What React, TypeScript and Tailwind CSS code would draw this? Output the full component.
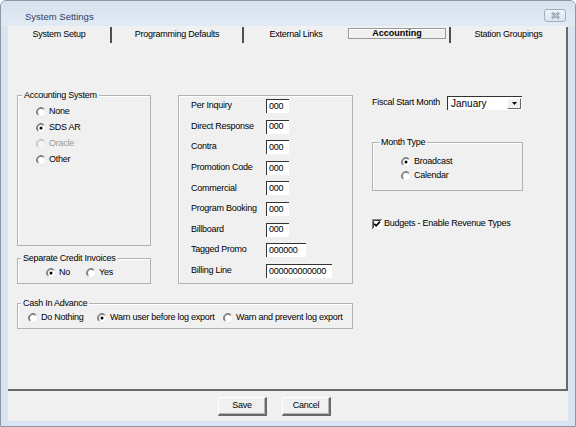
import React from "react";

function Radio({ checked = false, disabled = false }: { checked?: boolean; disabled?: boolean }) {
  const dark = disabled ? "#b4b4b4" : "#808080";
  const darker = disabled ? "#c4c4c4" : "#404040";
  return (
    <svg width="10" height="10" viewBox="0 0 12 12" className="shrink-0">
      <circle cx="6" cy="6" r="5.5" fill={disabled ? "#f4f4f4" : "#fff"} />
      <path d="M9.9 2.1A5.5 5.5 0 0 0 2.1 9.9" fill="none" stroke={dark} strokeWidth="1" />
      <path d="M9.2 2.8A4.5 4.5 0 0 0 2.8 9.2" fill="none" stroke={darker} strokeWidth="1" />
      <path d="M2.1 9.9A5.5 5.5 0 0 0 9.9 2.1" fill="none" stroke="#e6e6e6" strokeWidth="1" />
      {checked && <circle cx="6" cy="6" r="1.8" fill="#000" />}
    </svg>
  );
}

function Check() {
  return (
    <svg width="10" height="10" viewBox="0 0 10 10" className="shrink-0">
      <rect x="0" y="0" width="10" height="10" fill="#fff" />
      <path d="M0.5 10V0.5H10" fill="none" stroke="#808080" />
      <path d="M1.5 9V1.5H9" fill="none" stroke="#404040" />
      <path d="M2.2 4.8L4.1 6.9L8 2.6" fill="none" stroke="#000" strokeWidth="1.6" />
    </svg>
  );
}

function Option({ label, checked, disabled, className = "" }: { label: string; checked?: boolean; disabled?: boolean; className?: string }) {
  return (
    <div className={"flex items-center gap-[3px] " + className}>
      <Radio checked={checked} disabled={disabled} />
      <span className={disabled ? "text-[#9a9a9a]" : ""}>{label}</span>
    </div>
  );
}

function Group({ title, className, legend, children }: { title: string; className: string; legend: string; children?: React.ReactNode }) {
  return (
    <div className={"relative border border-[#b2b2b2] shadow-[inset_1px_1px_0_#fff] " + className}>
      <span className={"absolute -top-[6px] px-[2px] leading-[11px] bg-[#f0f0f0] " + legend}>{title}</span>
      {children}
    </div>
  );
}

const codes = [
  { label: "Per Inquiry", value: "000", w: "w-[23px]" },
  { label: "Direct Response", value: "000", w: "w-[23px]" },
  { label: "Contra", value: "000", w: "w-[23px]" },
  { label: "Promotion Code", value: "000", w: "w-[23px]" },
  { label: "Commercial", value: "000", w: "w-[23px]" },
  { label: "Program Booking", value: "000", w: "w-[23px]" },
  { label: "Billboard", value: "000", w: "w-[23px]" },
  { label: "Tagged Promo", value: "000000", w: "w-[40px]" },
  { label: "Billing Line", value: "000000000000", w: "w-[66px]" },
];

export default function App() {
  return (
    <div className="w-[576px] h-[427px] flex flex-col bg-[#d8e4f1] border border-[#8e97a4] rounded-t-[6px] overflow-hidden font-['Liberation_Sans',Arial,sans-serif] text-[9px] tracking-[-0.25px] text-black">
      {/* title bar */}
      <div className="h-[25px] flex items-start justify-between pl-[24px] pr-[9px] bg-linear-to-b from-[#d6e2f0] to-[#e2eaf4]">
        <span className="mt-[9px] text-[9.5px] tracking-normal text-[#2e4060]">System Settings</span>
        <div className="mt-[8px] w-[22px] h-[13px] rounded-[3px] border border-[#a3afbf] bg-linear-to-b from-[#eef3f9] to-[#d9e3ef] flex items-center justify-center">
          <svg width="9" height="7" viewBox="0 0 9 7">
            <path d="M1 0.8L8 6.2M8 0.8L1 6.2" stroke="#7b8796" strokeWidth="2.4" />
            <path d="M1.3 1L7.7 6M7.7 1L1.3 6" stroke="#f4f7fb" strokeWidth="0.9" />
          </svg>
        </div>
      </div>

      {/* client area */}
      <div className="flex-1 mx-[7px] mb-[5px] bg-[#f0f0f0] flex flex-col">
        <div className="mt-[1px] h-[364px] flex flex-col border-r-2 border-b-2 border-[#696969]">
          {/* tabs */}
          <div className="h-[16px] flex items-stretch shrink-0">
            <div className="w-[102px] flex items-center justify-center">System Setup</div>
            <div className="w-[2px] bg-[#505050]" />
            <div className="w-[130px] flex items-center justify-center">Programming Defaults</div>
            <div className="w-[2px] bg-[#505050]" />
            <div className="w-[104px] flex items-center justify-center">External Links</div>
            <div className="w-[98px] mt-[1px] h-[11px] border border-[#999] shadow-[inset_1px_1px_0_#fff] flex items-center justify-center font-bold tracking-normal">
              Accounting
            </div>
            <div className="w-[2px] ml-[3px] bg-[#505050]" />
            <div className="flex-1 flex items-center justify-center">Station Groupings</div>
          </div>

          {/* panel */}
          <div className="flex-1 pl-[9px] pt-[52px]">
            <div className="flex items-start">
              <div className="w-[134px] flex flex-col">
                <Group title="Accounting System" legend="left-[4px]" className="h-[151px] pl-[18px] pt-[8px]">
                  <Option label="None" className="h-[16px]" />
                  <Option label="SDS AR" checked className="h-[16px]" />
                  <Option label="Oracle" disabled className="h-[16px]" />
                  <Option label="Other" className="h-[16px]" />
                </Group>
                <Group title="Separate Credit Invoices" legend="left-[3px]" className="mt-[12px] h-[26px] pl-[28px] pt-[7px]">
                  <div className="flex h-[14px]">
                    <Option label="No" checked className="w-[40px]" />
                    <Option label="Yes" />
                  </div>
                </Group>
              </div>

              <div className="ml-[27px] w-[175px] h-[189px] border border-[#b2b2b2] shadow-[inset_1px_1px_0_#fff] pl-[12px] pt-[3px] flex flex-col gap-[6.6px]">
                {codes.map((c) => (
                  <div key={c.label} className="h-[14px] flex items-center">
                    <span className="w-[75px]">{c.label}</span>
                    <div className={"h-[14px] bg-white border-t border-l border-[#333] pl-[2px] flex items-center " + c.w}>
                      {c.value}
                    </div>
                  </div>
                ))}
              </div>

              <div className="ml-[19px] w-[151px] flex flex-col">
                <div className="mt-[1px] h-[14px] flex items-center">
                  <span className="w-[75px]">Fiscal Start Month</span>
                  <div className="w-[75px] h-[14px] bg-white border-t border-l border-[#333] flex items-center justify-between pl-[3px] pr-[1px]">
                    <span className="text-[10px] tracking-normal">January</span>
                    <div className="w-[14px] h-[11px] bg-[#f0f0f0] border-t border-l border-white border-r border-b border-r-[#696969] border-b-[#696969] flex items-center justify-center">
                      <svg width="5" height="3" viewBox="0 0 5 3">
                        <path d="M0 0H5L2.5 3Z" fill="#000" />
                      </svg>
                    </div>
                  </div>
                </div>
                <Group title="Month Type" legend="left-[6px]" className="mt-[32px] h-[49px] pl-[28px] pt-[12px]">
                  <Option label="Broadcast" checked className="h-[14px]" />
                  <Option label="Calendar" className="h-[14px]" />
                </Group>
                <div className="mt-[27px] h-[12px] flex items-center gap-[2px]">
                  <Check />
                  <span>Budgets - Enable Revenue Types</span>
                </div>
              </div>
            </div>

            <Group title="Cash In Advance" legend="left-[3px]" className="mt-[19px] w-[336px] h-[26px] pl-[10px] pt-[7px]">
              <div className="flex h-[14px]">
                <Option label="Do Nothing" className="w-[69px]" />
                <Option label="Warn user before log export" checked className="w-[126px]" />
                <Option label="Warn and prevent log export" />
              </div>
            </Group>
          </div>
        </div>

        {/* buttons */}
        <div className="flex-1 flex items-start pl-[210px] pt-[6px] gap-[15px]">
          <button className="w-[49px] h-[19px] bg-[#f0f0f0] border-t border-l border-white border-r-2 border-b-2 border-r-[#696969] border-b-[#696969] shadow-[inset_-1px_-1px_0_#b5b5b5]">
            Save
          </button>
          <button className="w-[49px] h-[19px] bg-[#f0f0f0] border-t border-l border-white border-r-2 border-b-2 border-r-[#696969] border-b-[#696969] shadow-[inset_-1px_-1px_0_#b5b5b5]">
            Cancel
          </button>
        </div>
      </div>
    </div>
  );
}
